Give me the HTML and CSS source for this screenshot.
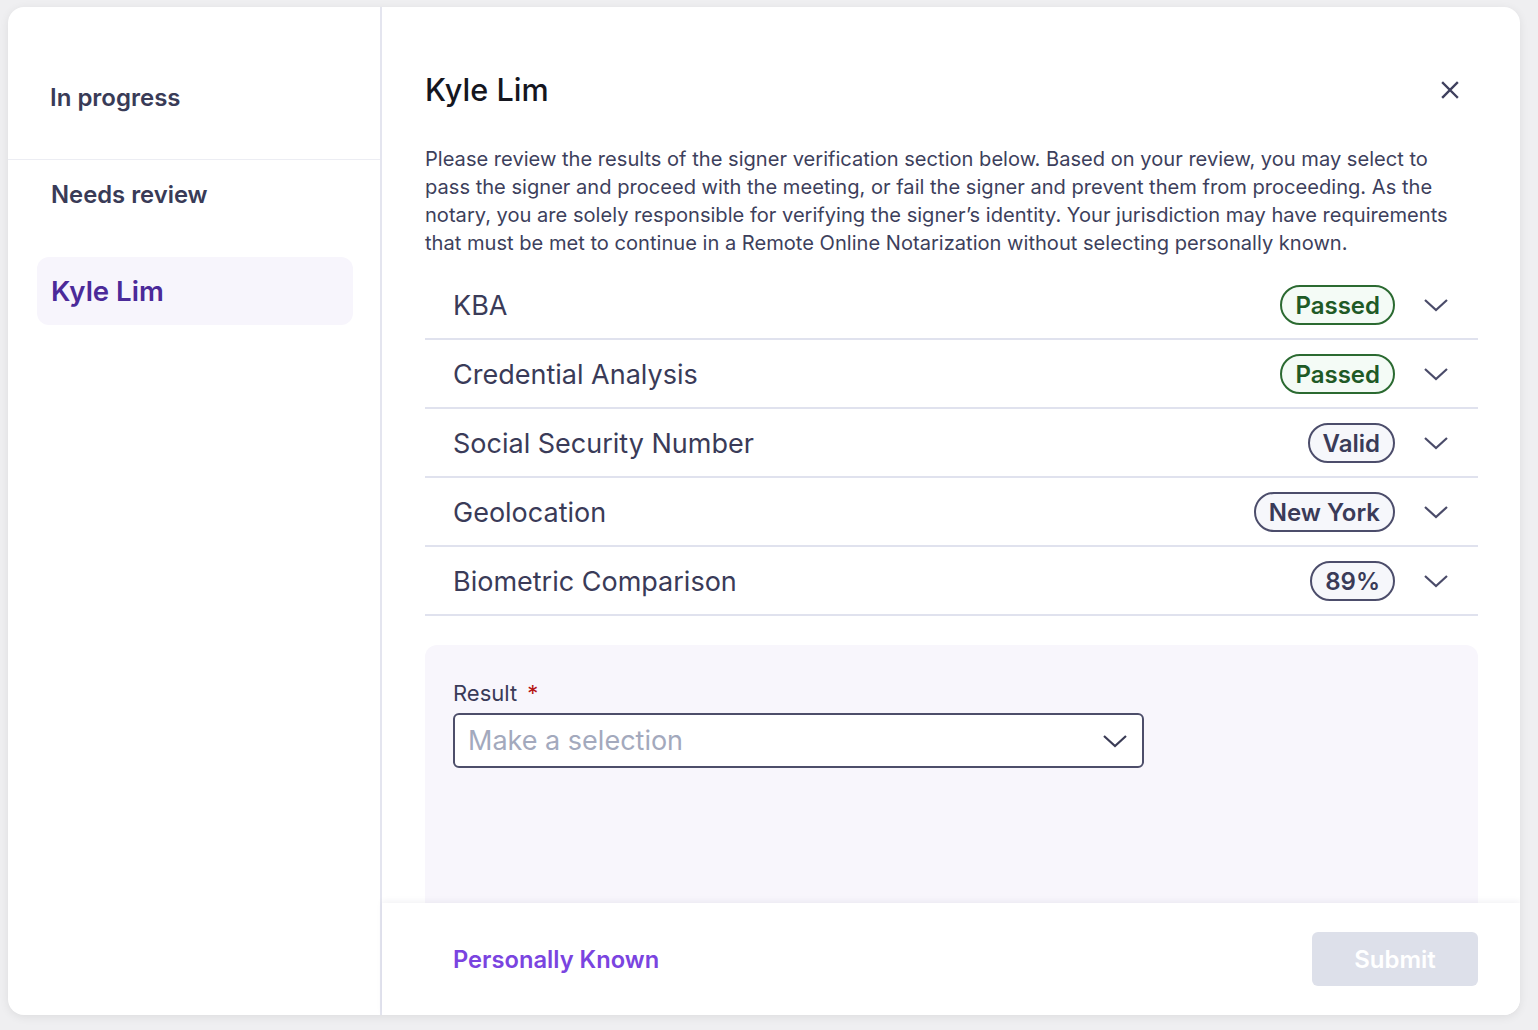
FILE: index.html
```html
<!doctype html>
<html>
<head>
    <meta charset="utf-8">
    <title>Signer verification</title>
    <link rel="stylesheet" href="styles.css">
</head>
<body>
<div class="card">
	<div class="sidebar">
		<div class="nav-top">In progress</div>
		<div class="nav-section">Needs review</div>
		<div class="nav-item active">Kyle Lim</div>
	</div>
	<div class="main">
		<div class="content">
			<div class="header">
				<h1 class="title">Kyle Lim</h1>
				<svg class="close" width="18" height="18" viewBox="0 0 18 18"><path d="M2 2L16 16M16 2L2 16" stroke="#3f405e" stroke-width="2.4" fill="none" stroke-linecap="square"/></svg>
			</div>
			<p class="intro">Please review the results of the signer verification section below. Based on your review, you may select to pass the signer and proceed with the meeting, or fail the signer and prevent them from proceeding. As the notary, you are solely responsible for verifying the signer’s identity. Your jurisdiction may have requirements that must be met to continue in a Remote Online Notarization without selecting personally known.</p>
			<ul class="checks">
				<li class="row">
					<span class="label">KBA</span>
					<span class="badge pass">Passed</span>
					<svg class="chev" width="26" height="14" viewBox="0 0 26 14"><path d="M2 2L13 12L24 2" stroke="#4a4b69" stroke-width="2.2" fill="none"/></svg>
				</li>
				<li class="row">
					<span class="label">Credential Analysis</span>
					<span class="badge pass">Passed</span>
					<svg class="chev" width="26" height="14" viewBox="0 0 26 14"><path d="M2 2L13 12L24 2" stroke="#4a4b69" stroke-width="2.2" fill="none"/></svg>
				</li>
				<li class="row">
					<span class="label">Social Security Number</span>
					<span class="badge">Valid</span>
					<svg class="chev" width="26" height="14" viewBox="0 0 26 14"><path d="M2 2L13 12L24 2" stroke="#4a4b69" stroke-width="2.2" fill="none"/></svg>
				</li>
				<li class="row">
					<span class="label">Geolocation</span>
					<span class="badge">New York</span>
					<svg class="chev" width="26" height="14" viewBox="0 0 26 14"><path d="M2 2L13 12L24 2" stroke="#4a4b69" stroke-width="2.2" fill="none"/></svg>
				</li>
				<li class="row">
					<span class="label">Biometric Comparison</span>
					<span class="badge">89%</span>
					<svg class="chev" width="26" height="14" viewBox="0 0 26 14"><path d="M2 2L13 12L24 2" stroke="#4a4b69" stroke-width="2.2" fill="none"/></svg>
				</li>
			</ul>
			<div class="result">
				<div class="field-label">Result <span class="req">*</span></div>
				<div class="select">
					<span class="placeholder">Make a selection</span>
					<svg width="26" height="14" viewBox="0 0 26 14"><path d="M2 2L13 12L24 2" stroke="#3a3b55" stroke-width="2.2" fill="none"/></svg>
				</div>
			</div>
		</div>
		<div class="footer">
			<span class="known">Personally Known</span>
			<span class="submit">Submit</span>
		</div>
	</div>
</div>
</body>
</html>
```

FILE: styles.css
```css
*{margin: 0;padding: 0;list-style: none;box-sizing: border-box;}
body{
	background: #efeff1;
	font-family: Inter, "Noto Sans", sans-serif;
	padding: 7px 18px 15px 8px;
}
.card{
	width: 1512px;height: 1008px;
	background: #fff;border-radius: 16px;
	box-shadow: 0 2px 10px rgba(0,0,0,0.08);
	display: flex;overflow: hidden;
}
.sidebar{
	width: 374px;flex-shrink: 0;
	border-right: 2px solid #e4e5ef;
}
.nav-top{
	padding: 77px 0 0 42px;height: 153px;
	border-bottom: 1px solid #ecedf3;
	font-size: 24px;line-height: 28px;font-weight: 600;color: #393b57;
}
.nav-section{
	padding: 21px 0 0 43px;
	font-size: 23.8px;line-height: 28px;font-weight: 600;color: #393b57;
}
.nav-item{
	margin: 48px 27px 0 29px;height: 68px;
	border-radius: 12px;padding-left: 14px;
	display: flex;align-items: center;
	font-size: 27.6px;font-weight: 600;
}
.nav-item.active{
	background: #f7f5fc;color: #4b2a99;
}
.main{
	flex: 1;display: flex;flex-direction: column;min-width: 0;
}
.content{
	flex: 1;min-height: 0;overflow: hidden;
	padding: 64px 42px 0 43px;
}
.header{
	display: flex;align-items: center;justify-content: space-between;
}
.title{
	font-size: 30.6px;line-height: 38px;font-weight: 500;color: #15161f;
}
.close{margin-right: 19px;}
.intro{
	margin-top: 36px;
	font-size: 20.1px;line-height: 28px;color: #3d3f5c;
}
.checks{margin-top: 14px;}
.row{
	height: 69px;border-bottom: 2px solid #e0e2ee;
	display: flex;align-items: center;
	padding: 1px 29px 0 28px;
}
.label{
	flex: 1;font-size: 27px;color: #3a3b58;
}
.badge{
	height: 40px;border-radius: 20px;padding: 0 13px;
	border: 2px solid #4c4d6b;background: #f6f7fb;color: #3a3b58;
	font-size: 24px;font-weight: 600;
	display: flex;align-items: center;
	margin-right: 28px;
}
.badge.pass{
	border-color: #2b6a31;background: #f4fbf6;color: #1f5a26;
}
.result{
	margin-top: 29px;height: 320px;
	background: #f8f6fc;border-radius: 12px;
	padding: 34px 28px;
}
.field-label{
	font-size: 22px;line-height: 28px;color: #3a3b58;
}
.req{color: #b51212;margin-left: 4px;}
.select{
	margin-top: 6px;width: 691px;height: 55px;
	background: #fff;border: 2px solid #4d4e6a;border-radius: 6px;
	display: flex;align-items: center;justify-content: space-between;
	padding: 0 14px 0 13px;
}
.placeholder{font-size: 27px;color: #a3a9bd;}
.footer{
	height: 112px;flex-shrink: 0;
	background: #fff;box-shadow: 0 -2px 6px rgba(40,40,80,0.06);
	display: flex;align-items: center;justify-content: space-between;
	padding: 0 42px 0 71px;position: relative;
}
.known{font-size: 23.7px;font-weight: 600;color: #7a44e0;}
.submit{
	width: 166px;height: 54px;border-radius: 6px;
	background: #dde0ea;color: #fff;
	font-size: 24px;font-weight: 600;
	display: flex;align-items: center;justify-content: center;
}
```
